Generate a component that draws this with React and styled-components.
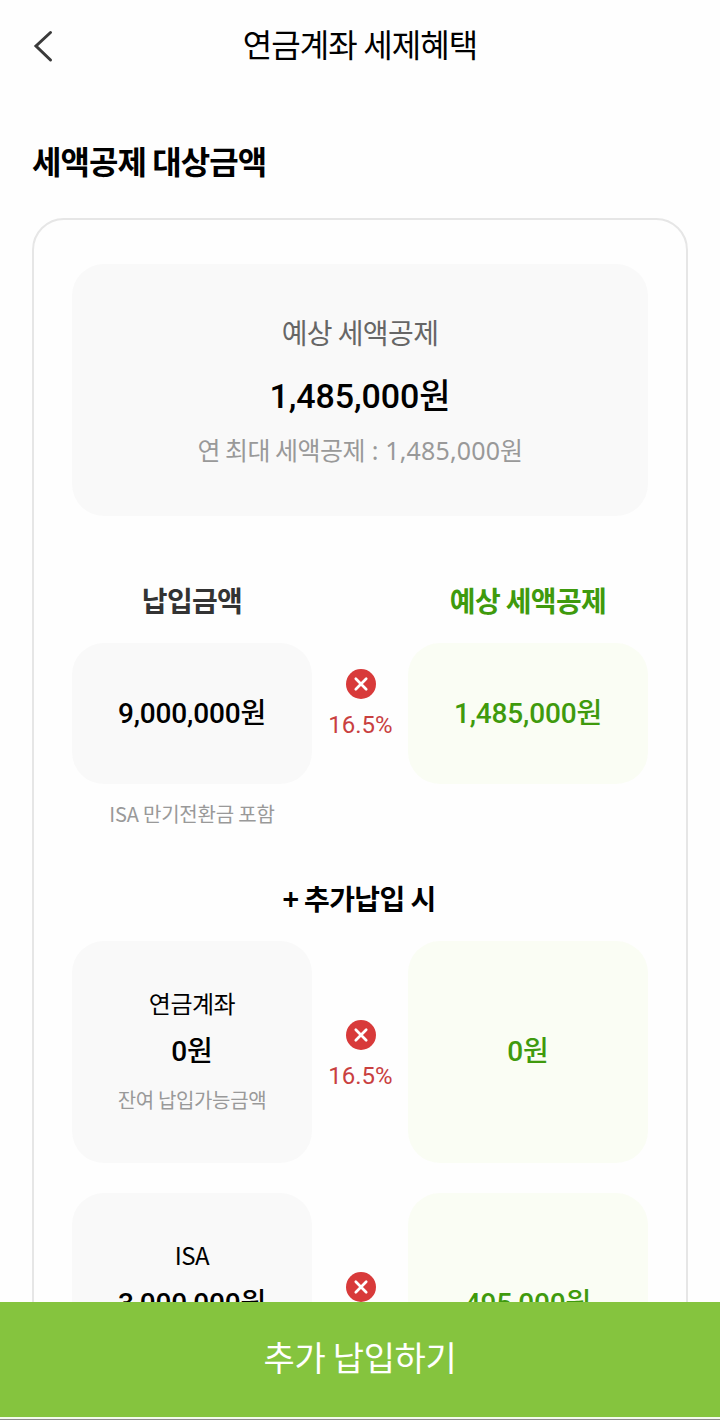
import React from 'react';
import styled, { createGlobalStyle } from 'styled-components';

const GlobalStyle = createGlobalStyle`
  * { box-sizing: border-box; }
  html, body { margin: 0; padding: 0; background: #fefefe; }
  body { font-family: 'Noto Sans CJK KR', sans-serif; overflow: hidden; }
  h1, h2, h3, p { margin: 0; }
`;

const Screen = styled.div`
  width: 720px;
  height: 1420px;
  display: flex;
  flex-direction: column;
  overflow: hidden;
  background: #fefefe;
`;

const Header = styled.header`
  flex: none;
  height: 92px;
  display: grid;
  grid-template-columns: 88px 1fr 88px;
  align-items: center;
`;

const BackButton = styled.button`
  border: 0;
  padding: 0 0 0 32px;
  background: none;
  height: 92px;
  display: flex;
  align-items: center;
  svg { display: block; }
`;

const Content = styled.main`
  flex: 1;
  min-height: 0;
  overflow: hidden;
  padding: 45px 32px 0;
`;

const families = {
  hangul: "'Noto Sans CJK KR', sans-serif",
  digits: "Roboto, 'Noto Sans CJK KR', sans-serif",
};

const Text = styled.p`
  font-family: ${(p) => families[p.$family || 'hangul']};
  font-size: ${(p) => p.$size}px;
  line-height: ${(p) => p.$line}px;
  font-weight: ${(p) => p.$weight || 400};
  letter-spacing: ${(p) => p.$track || 0}px;
  color: ${(p) => p.$color || '#000'};
  text-align: ${(p) => p.$align || 'center'};
  white-space: nowrap;
`;

const Title = styled(Text)`
  padding-bottom: 6px;
`;

const Digits = styled.span`
  font-family: 'Noto Sans', sans-serif;
  font-weight: 400;
  letter-spacing: 0.15px;
`;

const Card = styled.section`
  margin-top: 35px;
  height: 1300px;
  border: 2px solid #e6e6e6;
  border-radius: 32px;
  padding: 44px 38px 0;
`;

const Summary = styled.div`
  height: 252px;
  border-radius: 32px;
  background: #f9f9f9;
  padding-top: 46px;
`;

const Columns = styled.div`
  display: grid;
  grid-template-columns: 240px 96px 240px;
`;

const Headings = styled(Columns)`
  margin-top: 64px;
`;

const Row = styled(Columns)`
  margin-top: ${(p) => p.$gap}px;
  height: ${(p) => p.$height}px;
`;

const Box = styled.div`
  display: flex;
  flex-direction: column;
  align-items: center;
  justify-content: center;
  border-radius: 32px;
  background: ${(p) => (p.$green ? '#fafdf4' : '#f9f9f9')};
`;

const AccountBox = styled(Box)`
  padding-bottom: 2px;
`;

const Rate = styled.div`
  display: flex;
  flex-direction: column;
  align-items: center;
  gap: 8px;
  padding: ${(p) => p.$top}px 0 0 1px;
  svg { display: block; }
`;

const Note = styled.div`
  width: 240px;
  margin-top: 14px;
`;

const Divider = styled.div`
  margin-top: 48px;
  padding-right: 2px;
`;

const PayButton = styled.button`
  flex: none;
  height: 118px;
  border: 0;
  border-bottom: 1px solid #8b8b8b;
  padding: 0 0 8px;
  background: linear-gradient(#85c43e 115px, #f4faee 115px);
  display: flex;
  align-items: center;
  justify-content: center;
`;

const RateCell = ({ top }) => (
  <Rate $top={top}>
    <svg width="30" height="30" viewBox="0 0 30 30">
      <circle cx="15" cy="15" r="15" fill="#d83a3a" />
      <path d="M9.8 9.8L20.2 20.2M20.2 9.8L9.8 20.2" stroke="#fff" strokeWidth="2.7" strokeLinecap="round" />
    </svg>
    <Text $family="digits" $size={24} $line={36} $color="#c9403f">16.5%</Text>
  </Rate>
);

const Amount = ({ children, green }) => (
  <Text $family="digits" $size={28} $line={46} $weight={500} $track={-0.15} $color={green ? '#3f9a0d' : '#000'}>
    {children}
  </Text>
);

const Account = ({ name, amount, benefit, gap }) => (
  <Row $gap={gap} $height={222}>
    <AccountBox>
      <Text $size={24} $line={52} $track={-0.5}>{name}</Text>
      <Amount>{amount}</Amount>
      <Text $size={20} $line={50} $track={-0.35} $color="#999">잔여 납입가능금액</Text>
    </AccountBox>
    <RateCell top={79} />
    <Box $green><Amount green>{benefit}</Amount></Box>
  </Row>
);

export default function App() {
  return (
    <Screen>
      <GlobalStyle />
      <Header>
        <BackButton aria-label="뒤로">
          <svg width="24" height="34" viewBox="0 0 24 34" fill="none">
            <path d="M18.5 3.5L4 17L18.5 31" stroke="#3a3a3a" strokeWidth="3" strokeLinecap="round" />
          </svg>
        </BackButton>
        <Title as="h1" $size={32} $line={48} $track={-0.9}>연금계좌 세제혜택</Title>
      </Header>
      <Content>
        <Text as="h2" $size={32} $line={46} $weight={700} $track={-0.95} $align="left">세액공제 대상금액</Text>
        <Card>
          <Summary>
            <Text $size={28} $line={44} $track={-0.6} $color="#666">예상 세액공제</Text>
            <Text $family="digits" $size={34} $line={84} $weight={500} $track={-0.1}>1,485,000원</Text>
            <Text $size={25} $line={22} $track={-0.5} $color="#999">
              연 최대 세액공제<Digits> : 1,485,000</Digits>원
            </Text>
          </Summary>
          <Headings>
            <Text as="h3" $size={28} $line={40} $weight={700} $track={-0.65} $color="#333">납입금액</Text>
            <span />
            <Text as="h3" $size={28} $line={40} $weight={700} $track={-0.65} $color="#3f9a0d">예상 세액공제</Text>
          </Headings>
          <Row $gap={23} $height={141}>
            <Box><Amount>9,000,000원</Amount></Box>
            <RateCell top={26} />
            <Box $green><Amount green>1,485,000원</Amount></Box>
          </Row>
          <Note>
            <Text $size={20} $line={32} $track={-0.18} $color="#999">ISA 만기전환금 포함</Text>
          </Note>
          <Divider>
            <Text as="h3" $size={28} $line={40} $weight={700} $track={-0.6}>+ 추가납입 시</Text>
          </Divider>
          <Account gap={23} name="연금계좌" amount="0원" benefit="0원" />
          <Account gap={30} name="ISA" amount="3,000,000원" benefit="495,000원" />
        </Card>
      </Content>
      <PayButton>
        <Text as="span" $size={34} $line={50} $track={-0.34} $color="#fff">추가 납입하기</Text>
      </PayButton>
    </Screen>
  );
}
